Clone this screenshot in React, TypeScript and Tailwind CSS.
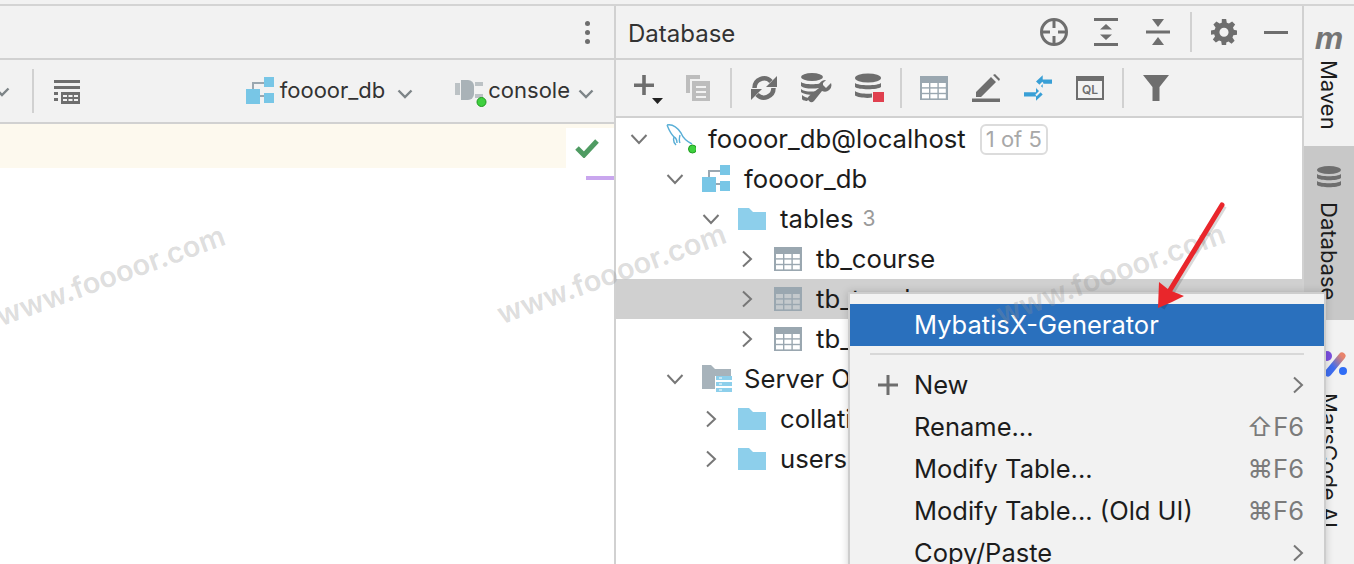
import type { ReactNode } from 'react'

const FONT = 'font-[Inter,"Liberation_Sans",sans-serif]'
const indents = ['pl-[11px]', 'pl-[47px]', 'pl-[83px]', 'pl-[119px]']

function Down({ className = '' }: { className?: string }) {
  return (
    <svg width="16" height="10" viewBox="0 0 16 10" className={className}>
      <path d="M1.5 1.5 8 8l6.5-6.5" fill="none" stroke="#7d8487" strokeWidth="2.4" />
    </svg>
  )
}

function Right() {
  return (
    <svg width="12" height="18" viewBox="0 0 12 18">
      <path d="M2 1.5 10 9l-8 7.5" fill="none" stroke="#777" strokeWidth="2" />
    </svg>
  )
}

function TreeDown() {
  return (
    <svg width="18" height="12" viewBox="0 0 18 12">
      <path d="M1.5 2 9 10l7.5-8" fill="none" stroke="#777" strokeWidth="2" />
    </svg>
  )
}

function Schema({ w = 28, h = 28 }: { w?: number; h?: number }) {
  return (
    <svg width={w} height={h} viewBox="0 0 28 28">
      <path d="M7 13V6h12" fill="none" stroke="#9aa7b0" strokeWidth="2" />
      <rect x="18" y="0" width="10" height="10" fill="#78c6e6" />
      <rect x="0" y="12" width="14" height="15" fill="#78c6e6" />
      <path d="M14 19h4" stroke="#9aa7b0" strokeWidth="2" />
      <rect x="18" y="16" width="10" height="10" fill="#78c6e6" />
    </svg>
  )
}

function Folder() {
  return (
    <svg width="28" height="22" viewBox="0 0 28 22">
      <path d="M0 0h11l4 4h13v18H0z" fill="#8dcfeb" />
    </svg>
  )
}

function TableIcon({ dark = false }: { dark?: boolean }) {
  const cell = dark ? '#c4c9cc' : '#fff'
  const cells = []
  for (let r = 0; r < 3; r++) {
    for (let c = 0; c < 3; c++) {
      cells.push(<rect key={`${r}-${c}`} x={2 + c * 8.4} y={7 + r * 5.6} width="7" height="4.2" fill={cell} />)
    }
  }
  return (
    <svg width="28" height="24" viewBox="0 0 28 24">
      <rect width="28" height="24" fill="#9aa7b0" />
      {cells}
    </svg>
  )
}

function Row({ depth, open, icon, children }: { depth: number; open?: boolean; icon: ReactNode; children: ReactNode }) {
  return (
    <div className={`flex h-10 items-center ${indents[depth]}`}>
      <div className="flex w-6 justify-center">{open ? <TreeDown /> : <Right />}</div>
      <div className="ml-[15px] flex w-[42px] shrink-0 items-center">{icon}</div>
      {children}
    </div>
  )
}

function Btn({ children }: { children: ReactNode }) {
  return <div className="flex h-full w-[52px] shrink-0 items-center justify-center">{children}</div>
}

function Sep() {
  return (
    <div className="flex w-[14px] shrink-0 justify-center">
      <div className="h-10 w-[2px] bg-[#d1d1d1]" />
    </div>
  )
}

function MenuItem({ icon, label, hint, more, active }: { icon?: ReactNode; label: string; hint?: string; more?: boolean; active?: boolean }) {
  return (
    <div className={`flex h-[42px] shrink-0 items-center pr-5 ${active ? 'bg-[#2a70bd] text-white' : 'text-[#1c1c1c]'}`}>
      <div className="flex w-[64px] shrink-0 items-center justify-end pr-[16px]">{icon}</div>
      <span className="flex-1 whitespace-nowrap pt-[1px]">{label}</span>
      {hint && <span className="pt-[1px] text-[#7b7b7b]">{hint}</span>}
      {more && <Right />}
    </div>
  )
}

function Mark({ className }: { className: string }) {
  return (
    <div className={`absolute z-20 -rotate-[20deg] whitespace-nowrap text-[29px] font-semibold text-[#8f8f8f]/30 ${className}`}>
      www.foooor.com
    </div>
  )
}

export default function App() {
  return (
    <div className={`relative h-[564px] w-[1354px] overflow-hidden bg-white ${FONT} text-[#1c1c1c]`}>
      <div className="h-[6px] border-b-2 border-[#d4d4d4] bg-[#f2f2f2]" />
      <div className="flex h-[558px]">
        {/* editor side */}
        <div className="flex w-[616px] shrink-0 flex-col border-r-2 border-[#d1d1d1]">
          <div className="flex h-[54px] items-center justify-end border-b-2 border-[#d1d1d1] bg-[#f2f2f2] pr-[24px]">
            <div className="flex flex-col gap-[4px]">
              <div className="h-[5px] w-[5px] rounded-full bg-[#6e6e6e]" />
              <div className="h-[5px] w-[5px] rounded-full bg-[#6e6e6e]" />
              <div className="h-[5px] w-[5px] rounded-full bg-[#6e6e6e]" />
            </div>
          </div>
          <div className="flex h-16 items-center border-b-2 border-[#d1d1d1] bg-[#f2f2f2] pr-[20px] text-[22px] text-[#333]">
            <Down className="-ml-[6px] mt-[2px]" />
            <div className="ml-[22px] h-11 w-[2px] bg-[#d1d1d1]" />
            <svg width="26" height="26" viewBox="0 0 26 26" className="ml-5">
              <path d="M0 2h26v3H0zM0 8h26v3H0zM0 14h4v3H0zM0 20h4v3H0z" fill="#6e6e6e" />
              <path d="M7 14h19v12H7z" fill="#6e6e6e" />
              <path d="M9 17h4v2H9zM14.500 17h4v2h-4zM20 17h4v2h-4zM9 21h4v2H9zM14.500 21h4v2h-4zM20 21h4v2h-4z" fill="#f2f2f2" />
            </svg>
            <div className="flex-1" />
            <Schema />
            <span className="ml-[6px] pb-[2px]">foooor_db</span>
            <Down className="ml-3 mt-[6px]" />
            <svg width="32" height="30" viewBox="0 0 32 30" className="ml-[42px] mt-[4px]">
              <path d="M0 5h5v12H0z" fill="#bcc2c5" />
              <path d="M6 2h7a6 6 0 0 1 6 6v8a6 6 0 0 1-6 6H6z" fill="#a9b2b7" />
              <path d="M20 4h8v4h-8zM20 16h8v4h-8z" fill="#bcc2c5" />
              <circle cx="26.500" cy="24" r="4.500" fill="#3fd03f" stroke="#1e9b1e" />
            </svg>
            <span className="ml-[1px] pb-[2px]">console</span>
            <Down className="ml-[8px] mt-[6px]" />
          </div>
          <div className="flex h-11 justify-end bg-[#fdf9ee] pt-1">
            <div className="flex w-12 items-center justify-center bg-white pr-[6px]">
              <svg width="24" height="20" viewBox="0 0 24 20">
                <path d="M2 10l7 7L22 3" fill="none" stroke="#4f9b62" strokeWidth="5" />
              </svg>
            </div>
          </div>
          <div className="ml-auto mt-2 h-1 w-7 bg-[#c9a6ee]" />
        </div>

        {/* database tool window */}
        <div className="flex min-w-0 flex-1 flex-col">
          <div className="flex h-[54px] shrink-0 items-center border-b-2 border-[#d1d1d1] bg-[#f2f2f2] pl-[12px]">
            <span className="flex-1 pt-[3px] text-[24px] text-[#333]">Database</span>
            <Btn>
              <svg width="30" height="30" viewBox="0 0 30 30" fill="none" stroke="#6e6e6e" strokeWidth="3">
                <circle cx="15" cy="15" r="12.500" />
                <path d="M15 2v9M15 19v9M2 15h9M19 15h9" />
              </svg>
            </Btn>
            <Btn>
              <svg width="26" height="28" viewBox="0 0 26 28" fill="#6e6e6e">
                <path d="M1 0h24v3H1zM1 25h24v3H1zM13 6l6 5.500H7zM13 22l-6-5.500h12z" />
              </svg>
            </Btn>
            <Btn>
              <svg width="26" height="28" viewBox="0 0 26 28" fill="#6e6e6e">
                <path d="M1 12.500h24v3H1zM7 1h12l-6 8zM13 19l6 8H7z" />
              </svg>
            </Btn>
            <Sep />
            <Btn>
              <svg width="26" height="26" viewBox="0 0 24 24" fill="#6e6e6e">
                <path fillRule="evenodd" d="M10 0h4l.6 3.400 2 .8L19.500 2.200l2.800 2.800-2 2.900.8 2L24 10.500v4l-3.400.6-.8 2 2 2.900-2.800 2.800-2.900-2-2 .8L14 24h-4l-.6-3.400-2-.8-2.900 2-2.800-2.800 2-2.900-.8-2L0 14.500v-4l3.400-.6.8-2-2-2.900L5 2.200l2.900 2 2-.8zM12 8a4.200 4.200 0 1 0 0 8.400A4.200 4.200 0 0 0 12 8z" />
              </svg>
            </Btn>
            <Btn>
              <div className="h-[3px] w-6 bg-[#6e6e6e]" />
            </Btn>
          </div>
          <div className="flex h-[58px] shrink-0 items-center border-b-2 border-[#d1d1d1] bg-[#f2f2f2] pl-1">
            <Btn>
              <svg width="30" height="32" viewBox="0 0 30 32" className="ml-[6px] mt-[6px]" fill="#6e6e6e">
                <path d="M0 8.500h20v3.500H0zM8.200 0h3.600v20H8.200z" />
                <path d="M18 23h11l-5.500 6z" fill="#222" />
              </svg>
            </Btn>
            <Btn>
              <svg width="24" height="26" viewBox="0 0 24 26" fill="#bdbdbd">
                <path d="M0 0h14v4H4v14H0z" />
                <path fillRule="evenodd" d="M6 6h18v20H6zM10 11v2h10v-2zM10 16v2h10v-2zM10 21v2h10v-2z" />
              </svg>
            </Btn>
            <Sep />
            <Btn>
              <svg width="26" height="26" viewBox="0 0 26 26" fill="none" stroke="#6e6e6e" strokeWidth="4.500">
                <path d="M3.500 13A9.500 9.500 0 0 1 20 6.500" />
                <path d="M22.500 13A9.500 9.500 0 0 1 6 19.500" />
                <path d="M26 1v11H15z" fill="#6e6e6e" stroke="none" />
                <path d="M0 25V14h11z" fill="#6e6e6e" stroke="none" />
              </svg>
            </Btn>
            <Btn>
              <svg width="32" height="30" viewBox="0 0 32 30" fill="#6e6e6e">
                <ellipse cx="12" cy="4" rx="11" ry="4" />
                <path d="M1 9c3 3 19 3 22 0v3l-4 3c-6 1-15 1-18-2zM1 16c3 3 12 3 15 2l-3 4c-4 0-10-1-12-3zM2 22c2 2 5 3 8 3l-3 3c-2 0-5-1-5-2z" />
                <path d="M31 10a6.500 6.500 0 0 1-9 8l-8 10a3 3 0 0 1-5-5l10-8a6.500 6.500 0 0 1 7-8l-4 4 4 4z" />
              </svg>
            </Btn>
            <Btn>
              <svg width="30" height="30" viewBox="0 0 30 30" className="ml-[4px]" fill="#6e6e6e">
                <ellipse cx="13" cy="5" rx="13" ry="4.500" />
                <path d="M0 10c3 3 23 3 26 0v4c-3 3-23 3-26 0zM0 18c3 3 14 3 17 2.500v4c-5 1-14 0-17-2z" />
                <rect x="18" y="19" width="11" height="10" fill="#e0404f" />
              </svg>
            </Btn>
            <Sep />
            <Btn>
              <TableIcon />
            </Btn>
            <Btn>
              <svg width="28" height="28" viewBox="0 0 28 28" fill="#6e6e6e">
                <path d="M4 18 19 3l5 5L9 23H4zM21 1l2-1 5 5-1 2z" />
                <path d="M0 24.500h28V28H0z" />
              </svg>
            </Btn>
            <Btn>
              <svg width="28" height="28" viewBox="0 0 28 28" fill="#389fd6">
                <path d="M12 7.500 18.700 1.300V5.500H28v4.200H18.700V13.700z" />
                <path d="M18.700 20.500 12 26.700V22.500H0v-4.200H12V13.500z" />
                <path d="M19 8.500 13.500 14l3 3-4.500 4.500" fill="none" stroke="#f2f2f2" strokeWidth="2" />
              </svg>
            </Btn>
            <Btn>
              <div className="flex h-6 w-7 items-center justify-center border-2 border-t-[5px] border-[#6e6e6e] text-[12px] font-semibold leading-none text-[#6e6e6e]">
                QL
              </div>
            </Btn>
            <Sep />
            <Btn>
              <svg width="26" height="26" viewBox="0 0 26 26" fill="#6e6e6e">
                <path d="M0 0h26L16.500 12v14h-7V12z" />
              </svg>
            </Btn>
          </div>
          <div className="pt-px text-[25.7px]">
            <Row
              depth={0}
              open
              icon={
                <svg width="30" height="30" viewBox="0 0 30 30" fill="none">
                  <path d="M1 1c5-1 10 2 14 8 2 5 5 8 11 11M1 1c2 5 3 8 7 12-1 3 0 6 2 8M8 13c2 1 3 3 3 6M14 11c-1 4-1 6 0 8" stroke="#58aed6" strokeWidth="1.400" />
                  <circle cx="26.500" cy="25" r="4" fill="#3ed13e" stroke="#1e9b1e" />
                </svg>
              }
            >
              <span className="whitespace-nowrap">foooor_db@localhost</span>
              <span className="ml-[14px] rounded-md border-2 border-[#dcdcdc] px-[4px] text-[22px] leading-[27px] text-[#a8a8a8]">1 of 5</span>
            </Row>
            <Row depth={1} open icon={<Schema />}>
              <span>foooor_db</span>
            </Row>
            <Row depth={2} open icon={<Folder />}>
              <span>tables</span>
              <span className="ml-[9px] text-[21px] text-[#9a9a9a]">3</span>
            </Row>
            <Row depth={3} icon={<TableIcon />}>
              <span>tb_course</span>
            </Row>
            <div className="bg-[#d0d0d0]">
              <Row depth={3} icon={<TableIcon dark />}>
                <span>tb_teacher</span>
              </Row>
            </div>
            <Row depth={3} icon={<TableIcon />}>
              <span>tb_student</span>
            </Row>
            <Row
              depth={1}
              open
              icon={
                <svg width="30" height="30" viewBox="0 0 30 30">
                  <path d="M0 1h9l4 4h16v7H13v13H0z" fill="#a7b3bb" />
                  <path d="M14 12h16v4H14zM14 18h16v4H14zM14 24h16v4H14z" fill="#8dcfeb" />
                  <path d="M17 13.500h3v1h-3zM17 19.500h3v1h-3zM17 25.500h3v1h-3z" fill="#fff" />
                </svg>
              }
            >
              <span className="whitespace-nowrap">Server Objects</span>
            </Row>
            <Row depth={2} icon={<Folder />}>
              <span>collations</span>
            </Row>
            <Row depth={2} icon={<Folder />}>
              <span>users</span>
            </Row>
          </div>
        </div>

        {/* tool strip */}
        <div className="flex w-[52px] shrink-0 flex-col items-center border-l-2 border-[#d1d1d1] bg-[#f2f2f2] text-[22px] leading-none text-[#1c1c1c]">
          <div className="flex h-[140px] w-full shrink-0 flex-col items-center pt-[16px]">
            <span className="font-['Liberation_Sans',sans-serif] text-[32px] font-bold italic leading-[32px] text-[#757575]">m</span>
            <span className="mt-[6px] [writing-mode:vertical-rl]">Maven</span>
          </div>
          <div className="flex h-[174px] w-full shrink-0 flex-col items-center bg-[#c8c8c8] pt-[20px]">
            <svg width="24" height="26" viewBox="0 0 24 26" fill="#6e6e6e">
              <ellipse cx="12" cy="4" rx="12" ry="4" />
              <path d="M0 8c3 3 21 3 24 0v4c-3 3-21 3-24 0zM0 15c3 3 21 3 24 0v4c-3 3-21 3-24 0z" />
            </svg>
            <span className="mt-[10px] [writing-mode:vertical-rl]">Database</span>
          </div>
          <div className="flex flex-col items-center pt-[30px]">
            <svg width="28" height="28" viewBox="0 0 28 28" className="ml-[8px]">
              <defs>
                <linearGradient id="mars" x1="0" y1="1" x2="1" y2="0">
                  <stop offset="0.35" stopColor="#3f6df0" />
                  <stop offset="1" stopColor="#e8836b" />
                </linearGradient>
              </defs>
              <circle cx="8" cy="6" r="5" fill="#7c4fe0" />
              <path d="M9 23 L23 6" stroke="url(#mars)" strokeWidth="7" strokeLinecap="round" />
              <circle cx="24" cy="21" r="4" fill="#2f6df6" />
            </svg>
            <span className="mt-[15px] whitespace-nowrap [writing-mode:vertical-rl]">MarsCode AI</span>
          </div>
        </div>
      </div>

      {/* context menu */}
      <div className="absolute left-[848px] top-[292px] z-10 flex h-[280px] w-[478px] flex-col border-2 border-[#cdcdcd] bg-[#f2f2f2] pt-[10px] text-[25.5px] shadow-[0_0_8px_rgba(0,0,0,0.18)]">
        <MenuItem label="MybatisX-Generator" active />
        <div className="mx-5 mb-[9px] mt-[7px] h-[2px] shrink-0 bg-[#d8d8d8]" />
        <MenuItem
          label="New"
          more
          icon={
            <svg width="20" height="20" viewBox="0 0 20 20" fill="#6e6e6e">
              <path d="M0 8.500h20v3H0zM8.500 0h3v20h-3z" />
            </svg>
          }
        />
        <MenuItem label="Rename..." hint="⇧F6" />
        <MenuItem label="Modify Table..." hint="⌘F6" />
        <MenuItem label="Modify Table... (Old UI)" hint="⌘F6" />
        <MenuItem label="Copy/Paste" more />
      </div>

      <Mark className="left-[-10px] top-[254px]" />
      <Mark className="left-[491px] top-[252px]" />
      <Mark className="left-[990px] top-[252px]" />

      {/* red arrow */}
      <svg width="80" height="116" viewBox="0 0 80 116" className="absolute left-[1150px] top-[198px] z-30">
        <path d="M72 6 L10 108" fill="none" stroke="#000" strokeOpacity="0.15" strokeWidth="6" transform="translate(2 2)" />
        <path d="M72 7 L14 102" fill="none" stroke="#e9262b" strokeWidth="5" strokeLinecap="round" />
        <path d="M8 110 L9 84 L19 92 L34 98 L22 104z" fill="#e9262b" />
      </svg>
    </div>
  )
}
